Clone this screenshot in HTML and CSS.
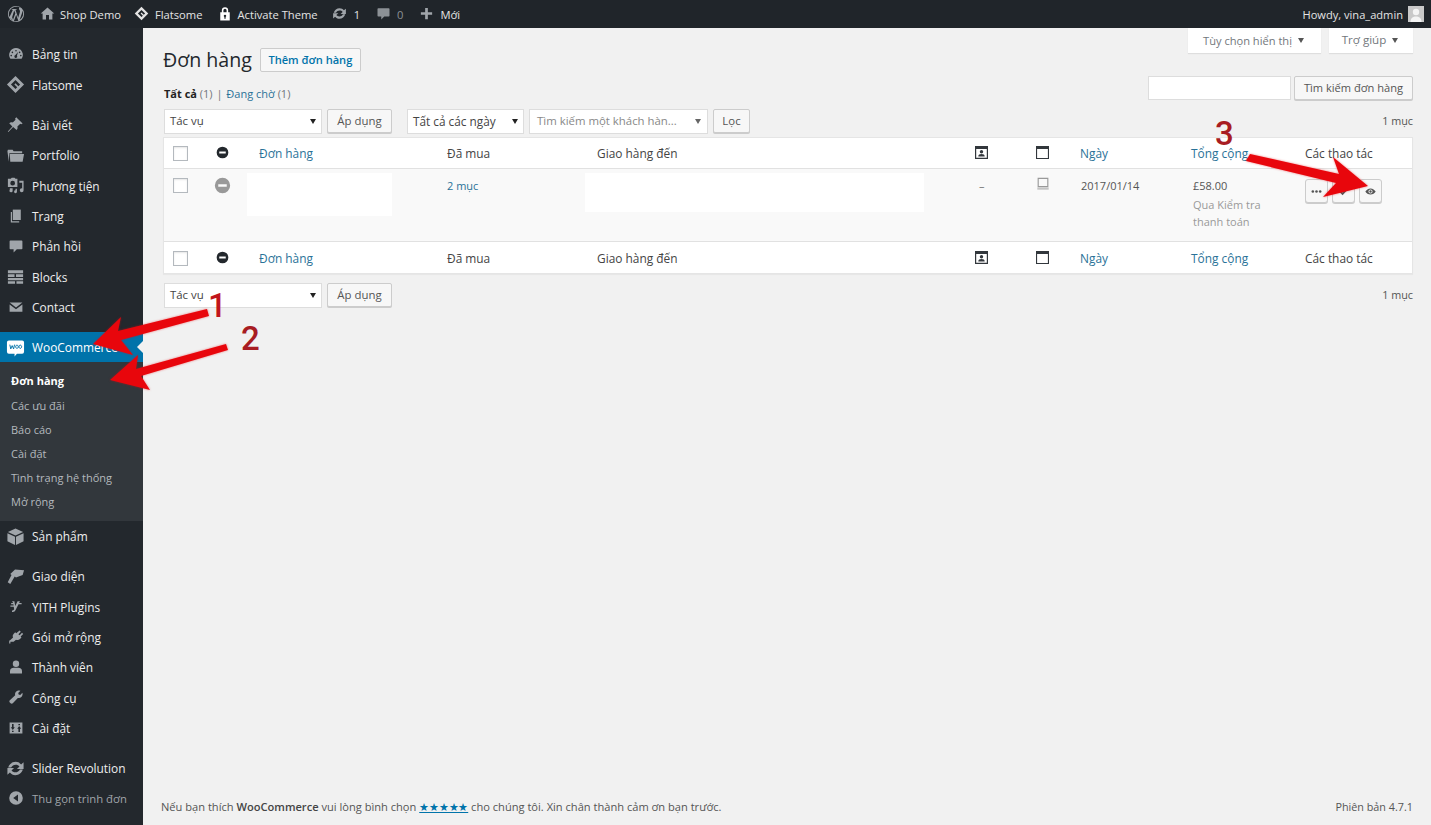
FILE: index.html
```html
<!DOCTYPE html>
<html lang="vi">
<head>
<meta charset="utf-8">
<title>Đơn hàng</title>
<link rel="stylesheet" href="styles.css">
</head>
<body>
<svg class="defs" width="0" height="0" aria-hidden="true">
  <symbol id="i-update" viewBox="0 0 20 20"><path d="M10.200 3c2.300 0 4.400 1.100 5.700 2.800L18.500 3.500V10.500h-7l2.700-2.600C13.300 6.700 11.900 6 10.200 6 8.100 6 6.300 7.100 5.400 9H2.300C3.300 5.500 6.400 3 10.200 3zM1.500 9.500h7l-2.700 2.600c.9 1.200 2.300 1.900 4 1.900 2.100 0 3.900-1.100 4.800-3h3.100c-1 3.500-4.100 6-7.900 6-2.300 0-4.400-1.100-5.700-2.800L1.500 16.500v-7z"/></symbol>
  <symbol id="i-bubble" viewBox="0 0 20 20"><path d="M3 3h14a1 1 0 0 1 1 1v9a1 1 0 0 1-1 1h-6l-4 4v-4H3a1 1 0 0 1-1-1V4a1 1 0 0 1 1-1z"/></symbol>
  <symbol id="i-diamond" viewBox="0 0 20 20"><path fill-rule="evenodd" d="M10 1l9 9-9 9-9-9 9-9zm0 4.200L5.200 10 10 14.800 11.800 13 8.800 10 10 8.800l3 3L14.800 10 10 5.200z"/></symbol>
  <symbol id="i-status" viewBox="0 0 20 20"><path fill-rule="evenodd" d="M10 1a9 9 0 1 1 0 18 9 9 0 0 1 0-18zM5 8.500v3h10v-3H5z"/></symbol>
  <symbol id="i-card" viewBox="0 0 13 13"><path fill-rule="evenodd" d="M0 0h13v13H0V0zm1.200 3v8.800h10.600V3H1.200z"/><circle cx="6.500" cy="5.800" r="1.700"/><path d="M3.300 10.500c0-1.800 1.300-2.500 3.200-2.500s3.200.7 3.200 2.500h-6.400z"/></symbol>
  <symbol id="i-window" viewBox="0 0 13 13"><path fill-rule="evenodd" d="M0 0h13v13H0V0zm1.100 3v8.900h10.800V3H1.100z"/></symbol>
</svg>

<header class="adminbar">
  <svg class="ab-logo" viewBox="0 0 20 20"><path fill-rule="evenodd" d="M10 1a9 9 0 1 1 0 18 9 9 0 0 1 0-18zm0 1a8 8 0 0 0-7.200 11.400L6.600 5.200c-.5 0-1 0-1 0-.5 0-.5-.8 0-.8 0 0 1.500.1 2.400.1s2.400-.1 2.400-.1c.5 0 .5.800 0 .8 0 0-.5 0-1 .1l3 8.800 1.700-5.600c.4-1.300.4-2 0-2.700-.4-.7-.8-1.300-.8-2 0-.8.600-1.400 1.300-1.400A8 8 0 0 0 10 2zm.2 8.700l-2.500 7a8 8 0 0 0 4.900-.1l-2.400-6.900zm6.900-4.500c.1 1-.1 2-.6 3.300l-2.500 7.100a8 8 0 0 0 3.100-10.400zM3.300 14.200A8 8 0 0 0 7 17.400L3.300 14.200zM8 6l-2.300 7.600 1 2.900 2.600-7.300L8 6z"/></svg>
  <div class="ab-item ab-home"><svg class="ab-icon" viewBox="0 0 20 20"><path d="M10 2l9 8h-2.500v8h-4.500v-6H8v6H3.500v-8H1l9-8z"/></svg><span>Shop Demo</span></div>
  <div class="ab-item ab-flat"><svg class="ab-icon ab-bright" viewBox="0 0 20 20"><use href="#i-diamond"/></svg><span>Flatsome</span></div>
  <div class="ab-item ab-lock"><svg class="ab-icon ab-white ab-lockicon" viewBox="3 0 14 19"><path fill-rule="evenodd" d="M4 8h2V5.500a4 4 0 0 1 8 0V8h2v10.500H4V8zm4-2.500V8h4V5.500a2 2 0 0 0-4 0zM10 11a1.500 1.500 0 0 0-.8 2.800V16h1.600v-2.200A1.500 1.500 0 0 0 10 11z"/></svg><span>Activate Theme</span></div>
  <div class="ab-item ab-upd"><svg class="ab-icon" viewBox="0 0 20 20"><use href="#i-update"/></svg><span>1</span></div>
  <div class="ab-item ab-com"><svg class="ab-icon ab-dim" viewBox="0 0 20 20"><use href="#i-bubble"/></svg><span class="ab-muted">0</span></div>
  <div class="ab-item ab-new"><svg class="ab-icon" viewBox="0 0 20 20"><path d="M8.200 2.500h3.600v5.700h5.700v3.600h-5.700v5.700H8.200v-5.700H2.500V8.200h5.700V2.500z"/></svg><span>Mới</span></div>
  <div class="ab-user"><span>Howdy, vina_admin</span><svg class="ab-avatar" viewBox="0 0 16 16"><rect width="16" height="16" fill="#c9c9c9"/><circle cx="8" cy="6" r="3.200" fill="#f4f4f4"/><path d="M2.500 16c0-4 2.500-5.500 5.500-5.500s5.500 1.500 5.500 5.500z" fill="#f4f4f4"/></svg></div>
</header>

<div class="layout">
  <nav class="sidebar">
    <ul class="menu">
      <li class="mi"><svg class="mi-icon" viewBox="0 0 20 20"><path fill-rule="evenodd" d="M10 2.500a8.500 8.500 0 0 1 7 13.300H3A8.500 8.500 0 0 1 10 2.500zM10 5a1 1 0 1 0 0 2 1 1 0 0 0 0-2zM5.500 7a1 1 0 1 0 0 2 1 1 0 0 0 0-2zm9 0a1 1 0 1 0 0 2 1 1 0 0 0 0-2zM4 11a1 1 0 1 0 0 2 1 1 0 0 0 0-2zm12 0a1 1 0 1 0 0 2 1 1 0 0 0 0-2zM12.500 7.500L9.300 11.400a1.800 1.800 0 1 0 1.900.7l1.300-4.600z"/></svg>Bảng tin</li>
      <li class="mi"><svg class="mi-icon mi-large" viewBox="0 0 20 20"><use href="#i-diamond"/></svg>Flatsome</li>
      <li class="mi mi-sep"><svg class="mi-icon mi-large" viewBox="0 0 20 20"><path d="M11 2.500l6.500 6.500-1.500.8-1-.6-3 3c.4 1.500.1 2.800-.8 3.700L7.500 12.700 2.500 18l-.6-.6 4.800-5.400-3.300-3.300c.9-.9 2.200-1.200 3.700-.8l3-3-.6-1 1.500-1.900z"/></svg>Bài viết</li>
      <li class="mi"><svg class="mi-icon mi-large" viewBox="0 0 20 20"><path d="M1.500 5.500L2 4h5l1 1.500h9v2H3.500l-.5 9L1.500 5.500zM4 8.500h15l-1.500 8h-13z"/></svg>Portfolio</li>
      <li class="mi"><svg class="mi-icon mi-large" viewBox="0 0 20 20"><path fill-rule="evenodd" d="M2 3h3l1-1.200h3L10 3h2v8.500H2V3zm5 2a2.500 2.500 0 1 0 0 5 2.500 2.500 0 0 0 0-5z"/><path d="M14 5h4.500v10a2 2 0 1 1-1.500-1.900V7H14zM4 13h3v2.500a1.700 1.700 0 1 1-1.200-1.600V14.500H4zM10 13.500h1.500v3a1.500 1.500 0 1 1-1.500-1.400z"/></svg>Phương tiện</li>
      <li class="mi"><svg class="mi-icon" viewBox="0 0 20 20"><path d="M6 2h10v13H6z"/><path d="M3.500 5H5v11.500h9V18H3.500z"/></svg>Trang</li>
      <li class="mi"><svg class="mi-icon" viewBox="0 0 20 20"><use href="#i-bubble"/></svg>Phản hồi</li>
      <li class="mi"><svg class="mi-icon mi-large" viewBox="0 0 20 20"><path d="M2 3.500h16v3H2zM2 7.500h7v3H2zM10.500 7.500H18v3h-7.500zM2 11.500h16v2.500H2zM2 15h7.500v2.500H2zM11 15h7v2.500h-7z"/></svg>Blocks</li>
      <li class="mi"><svg class="mi-icon" viewBox="0 0 20 20"><path d="M2 4.500h16L10 10.500 2 4.500zM2 6.800l8 6 8-6V16H2z"/></svg>Contact</li>

      <li class="mi mi-sep mi-active"><svg class="mi-icon mi-large" viewBox="0 0 20 20"><path fill="#fff" d="M3 2.500h14a2 2 0 0 1 2 2v10a2 2 0 0 1-2 2h-5.500L9 19.500V16.500H3a2 2 0 0 1-2-2v-10a2 2 0 0 1 2-2z"/><path fill="none" stroke="#0073aa" stroke-width="1" d="M4 7l1 4.500L6.500 8 8 11.500 9 7M11.500 7.500a1.400 1.700 0 1 0 .1 0zM15 7.500a1.400 1.700 0 1 0 .1 0z"/></svg>WooCommerce<span class="mi-caret"></span></li>
      <li class="submenu">
        <a class="sub sub-current">Đơn hàng</a>
        <a class="sub">Các ưu đãi</a>
        <a class="sub">Báo cáo</a>
        <a class="sub">Cài đặt</a>
        <a class="sub">Tình trạng hệ thống</a>
        <a class="sub">Mở rộng</a>
      </li>
      <li class="mi"><svg class="mi-icon mi-large" viewBox="0 0 20 20"><path d="M10 1.500l8 3.800-8 3.700-8-3.700z"/><path d="M1.500 6.500l8 3.800v8.700l-8-4zM18.500 6.500v8.500l-8 4v-8.700z"/></svg>Sản phẩm</li>

      <li class="mi mi-sep"><svg class="mi-icon mi-large" viewBox="0 0 20 20"><path d="M9.500 2.500l9.500 1-1.500 5-7 2.500-1.300-1L4.500 17.800 1.800 16l4-7.500-1.300-1.200L9.500 2.500z"/></svg>Giao diện</li>
      <li class="mi"><svg class="mi-icon" viewBox="0 0 20 20"><path d="M5 4h3l1 6 3-6h3l-1.200 2.300H17v1.500h-3.900L9.500 15c-.7 1.600-1.800 2.500-3.500 2.500H5v-2h1c.8 0 1.200-.4 1.500-1l.2-.5-.5-3H3V9.500h4L6.800 7.800H4v-1.500h2.500z"/></svg>YITH Plugins</li>
      <li class="mi"><svg class="mi-icon" viewBox="0 0 20 20"><path d="M14.500 2l1.500 1.300-3 3.200 1.500 1.300 3-3L19 6.200l-3.200 3.300 1 1.200-1.800 1.800c-1.500 1.500-3.500 1.700-5 .8L7 16H3v2H1.500v-3.500h.8l4-4c-.7-1.500-.5-3.300.9-4.700L9 4l1.300 1.200z"/></svg>Gói mở rộng</li>
      <li class="mi"><svg class="mi-icon" viewBox="0 0 20 20"><circle cx="10" cy="6" r="4"/><path d="M2.500 18v-3c0-2.500 2.500-4 4.500-4h6c2 0 4.500 1.500 4.500 4v3z"/></svg>Thành viên</li>
      <li class="mi"><svg class="mi-icon" viewBox="0 0 20 20"><path d="M14 2a4.700 4.700 0 0 1 1.500.3L12.800 5l.5 2 2 .5 2.700-2.700c.6 2 .1 4-1.300 5.300-1.200 1.100-2.900 1.500-4.400 1L6 17.700c-.8.800-2 .8-2.800 0l-.9-.9c-.8-.8-.8-2 0-2.800l6.700-6.200c-.5-1.500-.1-3.200 1-4.400C11 2.500 12.500 2 14 2z"/></svg>Công cụ</li>
      <li class="mi"><svg class="mi-icon" viewBox="0 0 20 20"><path fill-rule="evenodd" d="M2 3h16v14H2V3zm3 2v4H3.500L6 12.500 8.500 9H7V5H5zm8 10h2v-4h1.500L14 7.500 11.500 11H13v4zM5 13.500V15h2v-1.500H5zM13 5v1.500h2V5h-2z"/></svg>Cài đặt</li>

      <li class="mi mi-sep"><svg class="mi-icon mi-large" viewBox="0 0 20 20"><use href="#i-update"/></svg>Slider Revolution</li>
      <li class="mi mi-collapse"><svg class="mi-icon" viewBox="0 0 20 20"><path fill-rule="evenodd" d="M10 1.500a8.500 8.500 0 1 1 0 17 8.500 8.500 0 0 1 0-17zM12.500 5.500L6.500 10l6 4.500v-9z"/></svg>Thu gọn trình đơn</li>
    </ul>
  </nav>

  <main class="content">
    <div class="screen-tabs">
      <div class="screen-tab screen-tab-options">Tùy chọn hiển thị<span class="tri"></span></div>
      <div class="screen-tab screen-tab-help">Trợ giúp<span class="tri"></span></div>
    </div>

    <div class="title-row">
      <h1 class="title">Đơn hàng</h1>
      <a class="btn btn-add">Thêm đơn hàng</a>
    </div>

    <div class="filter-row">
      <div class="views"><strong>Tất cả</strong> <span class="count">(1)</span> <span class="pipe">|</span> <a class="link">Đang chờ</a> <span class="count">(1)</span></div>
      <div class="search">
        <div class="input"></div>
        <a class="btn btn-search">Tìm kiếm đơn hàng</a>
      </div>
    </div>

    <div class="tablenav">
      <div class="select select-action"><span>Tác vụ</span><span class="tri tri-dark"></span></div>
      <a class="btn btn-apply">Áp dụng</a>
      <div class="select select-date"><span>Tất cả các ngày</span><span class="tri tri-dark"></span></div>
      <div class="select select-customer"><span class="placeholder">Tìm kiếm một khách hàn...</span><span class="tri tri-mid"></span></div>
      <a class="btn btn-filter">Lọc</a>
      <div class="pages">1 mục</div>
    </div>

    <div class="table">
      <div class="tr tr-head">
        <div class="cb"></div>
        <svg class="ic-status" viewBox="0 0 20 20"><use href="#i-status"/></svg>
        <a class="link">Đơn hàng</a>
        <div>Đã mua</div>
        <div>Giao hàng đến</div>
        <svg class="ic-col" viewBox="0 0 13 13"><use href="#i-card"/></svg>
        <svg class="ic-col" viewBox="0 0 13 13"><use href="#i-window"/></svg>
        <a class="link">Ngày</a>
        <a class="link">Tổng cộng</a>
        <div>Các thao tác</div>
      </div>
      <div class="tr tr-body">
        <div class="cb"></div>
        <svg class="ic-status ic-status-row" viewBox="0 0 20 20"><use href="#i-status"/></svg>
        <div class="redact redact-order"></div>
        <a class="link">2 mục</a>
        <div class="redact redact-ship"></div>
        <div class="dash">–</div>
        <svg class="ic-note" viewBox="0 0 16 16"><path fill="none" stroke="#999" stroke-width="1.300" d="M2.500 1.500h11v9.500h-11z"/><path fill="#c4c4c4" d="M1.500 12h13v2.500h-13z"/></svg>
        <div class="date">2017/01/14</div>
        <div class="total">£58.00<small>Qua Kiểm tra<br>thanh toán</small></div>
        <div class="actions">
          <a class="act"><svg viewBox="0 0 12 12"><circle cx="2" cy="6" r="1.400"/><circle cx="6" cy="6" r="1.400"/><circle cx="10" cy="6" r="1.400"/></svg></a>
          <a class="act"><svg viewBox="0 0 12 12"><path d="M1 6l1.500-1.500L5 7l4.500-5L11 3.500 5 10z"/></svg></a>
          <a class="act"><svg viewBox="0 0 16 12"><path fill-rule="evenodd" d="M8 1.500c3.300 0 6 2 7.500 4.500C14 8.500 11.300 10.500 8 10.500S2 8.500.5 6C2 3.500 4.700 1.500 8 1.500zM8 3a3 3 0 1 0 0 6 3 3 0 0 0 0-6z"/><circle cx="8" cy="6" r="1.700"/></svg></a>
        </div>
      </div>
      <div class="tr tr-foot">
        <div class="cb"></div>
        <svg class="ic-status" viewBox="0 0 20 20"><use href="#i-status"/></svg>
        <a class="link">Đơn hàng</a>
        <div>Đã mua</div>
        <div>Giao hàng đến</div>
        <svg class="ic-col" viewBox="0 0 13 13"><use href="#i-card"/></svg>
        <svg class="ic-col" viewBox="0 0 13 13"><use href="#i-window"/></svg>
        <a class="link">Ngày</a>
        <a class="link">Tổng cộng</a>
        <div>Các thao tác</div>
      </div>
    </div>

    <div class="tablenav tablenav-bottom">
      <div class="select select-action"><span>Tác vụ</span><span class="tri tri-dark"></span></div>
      <a class="btn btn-apply">Áp dụng</a>
      <div class="pages">1 mục</div>
    </div>

    <footer class="footer">
      <div>Nếu bạn thích <strong>WooCommerce</strong> vui lòng bình chọn <a class="stars">★★★★★</a> cho chúng tôi. Xin chân thành cảm ơn bạn trước.</div>
      <div class="version">Phiên bản 4.7.1</div>
    </footer>
  </main>
</div>

<svg class="annotations" viewBox="0 0 1431 825" aria-hidden="true">
  <path class="arrow" d="M93 344L121 317L118 331L207 309L209 316L121 340L133 355z"/>
  <path class="arrow" d="M110 380L138 355L136 369L226 344L228 350L141 376L150 390z"/>
  <path class="arrow" d="M1368 186L1333 157L1339 174L1250 154L1246 161L1336 183L1323 197z"/>
</svg>
<div class="mark mark-1">1</div>
<div class="mark mark-2">2</div>
<div class="mark mark-3">3</div>
</body>
</html>
```
FILE: styles.css
```css
* { box-sizing: border-box; }
html, body { margin: 0; height: 825px; overflow: hidden; }
body {
  background: #f1f1f1;
  color: #444;
  font: 11.4px/1.4 "Open Sans", "Noto Sans", sans-serif;
  position: relative;
}
.defs { position: absolute; }
a { color: inherit; text-decoration: none; }
ul { list-style: none; margin: 0; padding: 0; }

/* admin bar */
.adminbar {
  height: 28px;
  background: #20252a;
  color: #e4e4e4;
  display: flex;
  align-items: center;
  padding: 1px 7px 0;
  font-size: 11.2px;
}
.adminbar svg { fill: #a0a5aa; flex: none; }
.ab-logo { width: 18px; height: 18px; margin-top: -1px; }
.ab-item { display: flex; align-items: center; gap: 6px; }
.ab-icon { width: 15px; height: 15px; margin-top: -1px; }
.ab-lockicon { width: 14px; }
.adminbar .ab-white { fill: #fff; }
.adminbar .ab-bright { fill: #e4e4e4; }
.adminbar .ab-dim { fill: #8c9196; }
.ab-muted { color: #8c9196; }
.ab-home { margin-left: 15px; gap: 5px; }
.ab-flat { margin-left: 13px; }
.ab-lock { margin-left: 16px; gap: 5px; }
.ab-upd { margin-left: 14px; gap: 7px; }
.ab-com { margin-left: 16px; }
.ab-new { margin-left: 16px; }
.ab-user { margin-left: auto; display: flex; align-items: center; gap: 5px; font-size: 11.1px; }
.ab-avatar { width: 16px; height: 16px; margin-top: -1px; }

/* layout */
.layout { display: flex; height: 797px; }

/* sidebar */
.sidebar {
  width: 143px;
  flex: none;
  background: #23282d;
  color: #eee;
  padding-top: 11px;
  font-size: 11.9px;
}
.mi {
  height: 30.4px;
  display: flex;
  align-items: center;
  padding: 1px 0 0 32px;
  position: relative;
}
.mi-icon {
  position: absolute;
  left: 8px;
  top: 7px;
  width: 16px;
  height: 16px;
  fill: #a0a5aa;
}
.mi-large { left: 6px; top: 6px; width: 19px; height: 19px; }
.mi-sep { margin-top: 9.600px; }
.mi-active { background: #0073aa; color: #fff; }
.mi-caret {
  position: absolute;
  right: 0;
  top: 50%;
  margin-top: -6px;
  border: 6px solid transparent;
  border-right-color: #f1f1f1;
  border-left-width: 0;
}
.mi-collapse { color: #a0a5aa; font-size: 11.3px; }
.submenu { background: #32373c; padding: 7px 0 6.600px; }
.sub {
  display: flex;
  align-items: center;
  height: 24.200px;
  padding-left: 11px;
  font-size: 11px;
  color: #b4b9be;
}
.sub-current { color: #fff; font-weight: 700; }

/* content */
.content {
  flex: 1;
  min-width: 0;
  padding: 0 18px 0 20px;
  display: flex;
  flex-direction: column;
  position: relative;
}
.screen-tabs {
  position: absolute;
  top: 0;
  right: 18px;
  display: flex;
  gap: 8px;
}
.screen-tab {
  height: 25px;
  background: #fff;
  color: #72777c;
  font-size: 11.1px;
  box-shadow: 0 1px 1px rgba(0,0,0,.08);
  display: flex;
  align-items: center;
  justify-content: center;
  gap: 6px;
}
.screen-tab-options { width: 133px; padding-right: 2px; }
.screen-tab-help { width: 84px; font-size: 11.6px; padding-right: 2px; }
.tri {
  width: 0;
  height: 0;
  border: 3.500px solid transparent;
  border-top: 5px solid #555;
  border-bottom: 0;
  flex: none;
}
.tri-dark { border-top-color: #222; }
.tri-mid { border-top-color: #666; }

.title-row {
  display: flex;
  align-items: center;
  gap: 8px;
  margin-top: 20px;
  height: 24px;
}
.title { margin: 0; font-size: 19.6px; font-weight: 400; color: #23282d; line-height: 24px; }

.btn {
  display: flex;
  align-items: center;
  justify-content: center;
  height: 24px;
  background: #f7f7f7;
  border: 1px solid #ccc;
  border-radius: 2px;
  box-shadow: 0 1px 0 #ccc;
  color: #555;
}
.btn-add { width: 101px; color: #0073aa; font-weight: 600; font-size: 11.1px; box-shadow: none; }
.btn-search { width: 119px; font-size: 11.1px; }
.btn-apply { width: 65px; }
.btn-filter { width: 37px; margin-left: 5px; }

.filter-row {
  display: flex;
  justify-content: space-between;
  align-items: flex-end;
  margin-top: 4px;
  height: 24px;
}
.views { margin-left: 1px; font-size: 11px; color: #555; line-height: 16px; margin-bottom: -2px; }
.views strong { color: #222; }
.count { color: #72777c; }
.pipe { color: #777; margin: 0 1px; }
.link { color: #2a7298; }
.search { display: flex; gap: 3px; }
.input {
  width: 143px;
  height: 24px;
  background: #fff;
  border: 1px solid #ddd;
}

.tablenav {
  display: flex;
  align-items: center;
  margin-top: 8px;
  height: 26px;
}
.tablenav-bottom { margin-top: 8px; }
.select {
  height: 25px;
  background: #fff;
  border: 1px solid #ddd;
  display: flex;
  align-items: center;
  justify-content: space-between;
  padding: 0 5px 0 5px;
  color: #444;
}
.select-action { width: 158px; margin-left: 1px; margin-right: 5px; }
.select-date { width: 117px; margin-left: 15px; margin-right: 5px; }
.select-date span:first-child { font-size: 11.8px; }
.select-customer { width: 179px; padding: 0 6px 0 7px; }
.placeholder { color: #888; }
.pages { margin-left: auto; font-size: 10.800px; color: #555; }

/* table */
.table {
  margin-top: 3px;
  background: #fff;
  border: 1px solid #e5e5e5;
  box-shadow: 0 1px 1px rgba(0,0,0,.04);
  font-size: 11.9px;
}
.tr {
  display: grid;
  grid-template-columns: 40px 44px 188px 150px 377px 61px 45px 111px 114px 107px;
  padding-left: 11px;
  color: #444;
}
.tr-head, .tr-foot { align-items: center; }
.tr-head { height: 31px; padding-top: 1px; border-bottom: 1px solid #e1e1e1; }
.tr-foot { height: 32px; padding-top: 2px; border-top: 1px solid #e1e1e1; }
.tr-body {
  height: 72px;
  background: #f9f9f9;
  padding-top: 9px;
  align-items: start;
  color: #555;
  font-size: 11px;
}
.cb {
  width: 15px;
  height: 15px;
  margin-left: -2px;
  margin-top: -1px;
  background: #fff;
  border: 1px solid #b4b9be;
  box-shadow: inset 0 1px 2px rgba(0,0,0,.1);
}
.ic-status { width: 13px; height: 13px; fill: #23282d; margin-left: 1px; margin-top: -2px; }
.ic-status-row { width: 17px; height: 17px; fill: #999; margin-left: -1px; margin-top: -1px; }
.tr-body .cb { margin-top: 0; }
.ic-col { width: 13px; height: 13px; fill: #32373c; margin-left: 1px; margin-top: -2px; }
.redact { background: #fff; }
.redact-order { width: 145px; height: 43px; margin: -5px 0 0 -12px; }
.redact-ship { width: 339px; height: 39px; margin: -5px 0 0 -12px; }
.dash { margin-left: 5px; color: #777; }
.ic-note { width: 14px; height: 14px; margin-left: 1px; margin-top: -1px; }
.date { margin-left: 1px; }
.total { margin-left: 2px; line-height: 16px; }
.total small { display: block; margin-top: 2px; font-size: 11px; color: #999; line-height: 17px; }
.actions { display: flex; gap: 4px; padding-top: 1px; }
.act {
  width: 23px;
  height: 24px;
  background: #f7f7f7;
  border: 1px solid #ccc;
  border-radius: 3px;
  box-shadow: 0 1px 0 #ccc;
  display: flex;
  align-items: center;
  justify-content: center;
}
.act svg { width: 11px; height: 11px; fill: #555; }

/* footer */
.footer {
  margin-top: auto;
  display: flex;
  justify-content: space-between;
  padding: 0 0 10px 0;
  font-size: 11.1px;
  color: #555;
  margin-left: -2px;
}
.footer strong { font-weight: 600; color: #444; }
.version { font-size: 10.800px; }
.stars { color: #0073aa; text-decoration: underline; letter-spacing: -.2px; }

/* annotations laid over the page */
.annotations {
  position: absolute;
  left: 0;
  top: 0;
  width: 1431px;
  height: 825px;
  pointer-events: none;
  filter: drop-shadow(0 0 1px rgba(232,6,12,.5));
}
.arrow { fill: #e8060c; }
.mark {
  position: absolute;
  font: 500 33px/20px Roboto, "Liberation Sans", sans-serif;
  height: 20px;
  color: #a81c22;
}
.mark-1 { left: 208px; top: 296px; color: #c1151b; }
.mark-2 { left: 241px; top: 329px; }
.mark-3 { left: 1215px; top: 124px; }
```
